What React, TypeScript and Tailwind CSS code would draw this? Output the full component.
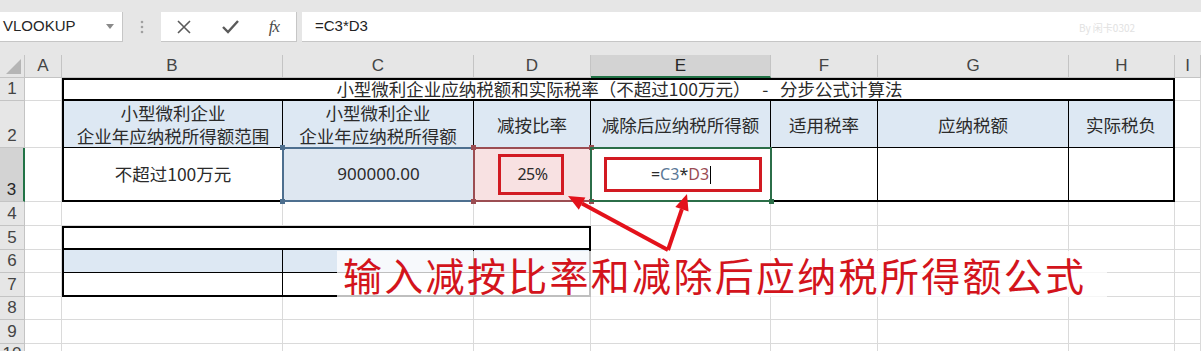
import React from "react";

const cols = ["A", "B", "C", "D", "E", "F", "G", "H", "I"];
const rowNums = [1, 2, 3, 4, 5, 6, 7, 8, 9, 10];

const cjk = "font-['Noto_Sans_CJK_SC','Noto_Sans',sans-serif]";

function Corner({ pos, color }: { pos: string; color: string }) {
  return <span className={`absolute w-[5px] h-[5px] ${pos} ${color}`} />;
}

function Toolbar() {
  return (
    <div className="h-[55px] bg-[#e6e6e6] pt-[12px] flex items-start">
      <div className="w-[123px] h-[30px] bg-white border-r border-b border-[#c6c6c6] flex items-center justify-between pl-[3px] pr-[8px]">
        <span className="text-[15px] text-[#262626] font-['Liberation_Sans',sans-serif]">VLOOKUP</span>
        <svg width="8" height="5" viewBox="0 0 8 5">
          <path d="M0 0 L8 0 L4 5 Z" fill="#8a8a8a" />
        </svg>
      </div>
      <div className="w-[38px] h-[30px] flex items-center justify-center">
        <svg width="4" height="14" viewBox="0 0 4 14">
          <circle cx="2" cy="2" r="1.3" fill="#a0a0a0" />
          <circle cx="2" cy="7" r="1.3" fill="#a0a0a0" />
          <circle cx="2" cy="12" r="1.3" fill="#a0a0a0" />
        </svg>
      </div>
      <div className="w-[136px] h-[30px] bg-white border-r border-b border-[#c6c6c6] flex items-center">
        <div className="w-[45px] flex justify-center pl-[1px]">
          <svg width="14" height="14" viewBox="0 0 14 14">
            <path d="M1 1 L13 13 M13 1 L1 13" stroke="#5a5a5a" strokeWidth="1.6" />
          </svg>
        </div>
        <div className="w-[48px] flex justify-center">
          <svg width="17" height="14" viewBox="0 0 17 14">
            <path d="M1 7 L6 12 L16 1" stroke="#5a5a5a" strokeWidth="2.4" fill="none" />
          </svg>
        </div>
        <div className="w-[40px] flex justify-center">
          <span className="italic text-[17px] text-[#4a4a4a] font-['Liberation_Serif',serif] tracking-[-1px]">fx</span>
        </div>
      </div>
      <div className="ml-[5px] flex-1 h-[30px] bg-white border-b border-[#c6c6c6] flex items-center pl-[13px] relative">
        <span className="text-[15px] text-[#222] font-['Liberation_Sans',sans-serif]">=C3*D3</span>
        <span className={`absolute left-[777px] top-[8px] text-[10px] text-[#e2e2e2] ${cjk}`}>By 闲卡0302</span>
      </div>
    </div>
  );
}

function Title() {
  const head = `flex items-center justify-center text-center text-[17.5px] leading-[23px] text-[#2b2b2b] bg-[#dde8f3] border-r border-black ${cjk}`;
  return (
    <div className="col-start-3 col-span-7 row-start-2 row-span-3 border-2 border-black bg-white grid grid-cols-[219px_191px_117px_180px_107px_191px_1fr]">
      <div className={`col-span-7 h-[21px] border-b-2 border-black flex items-center justify-center pl-[2px] text-[17.5px] text-[#2b2b2b] whitespace-pre ${cjk}`}>
        {"小型微利企业应纳税额和实际税率（不超过100万元）   -   分步公式计算法"}
      </div>
      <div className={`${head} h-[47px] border-b`}>
        小型微利企业
        <br />
        企业年应纳税所得额范围
      </div>
      <div className={`${head} h-[47px] border-b`}>
        小型微利企业
        <br />
        企业年应纳税所得额
      </div>
      <div className={`${head} h-[47px] border-b`}>减按比率</div>
      <div className={`${head} h-[47px] border-b`}>减除后应纳税所得额</div>
      <div className={`${head} h-[47px] border-b`}>适用税率</div>
      <div className={`${head} h-[47px] border-b`}>应纳税额</div>
      <div className={`${head} h-[47px] border-b border-r-0`}>实际税负</div>

      <div className={`h-[52px] border-r border-black flex items-center justify-center text-[17.5px] text-[#2b2b2b] ${cjk}`}>
        不超过100万元
      </div>
      <div className="h-[52px] relative bg-[#dee7f1] flex items-center justify-center text-[17px] text-[#2b2b2b] font-['Noto_Sans',sans-serif]">
        <span className="absolute left-[-1px] right-[-1px] top-[-1px] bottom-[-2px] border-2 border-[#4d6f8f]" />
        <Corner pos="left-[-3px] top-[-3px]" color="bg-[#4d6f8f]" />
        <Corner pos="left-[-3px] bottom-[-4px]" color="bg-[#4d6f8f]" />
        <span className="relative">900000.00</span>
      </div>
      <div className="h-[52px] relative bg-[#f8e1e2] flex items-center justify-center text-[16px] text-[#2b2b2b] font-['Noto_Sans',sans-serif]">
        <span className="absolute left-[-1px] right-[-1px] top-[-1px] bottom-[-2px] border-2 border-[#9c4d52]" />
        <Corner pos="left-[-3px] top-[-3px]" color="bg-[#9c4d52]" />
        <Corner pos="right-[-3px] top-[-3px]" color="bg-[#9c4d52]" />
        <Corner pos="left-[-3px] bottom-[-4px]" color="bg-[#9c4d52]" />
        <Corner pos="right-[-3px] bottom-[-4px]" color="bg-[#9c4d52]" />
        <span className="absolute left-[24px] top-[6px] w-[66px] h-[41px] border-[3px] border-[#d21a22]" />
        <span className="relative tracking-[-0.5px] mt-[-1px]">25%</span>
      </div>
      <div className="h-[52px] relative flex items-center justify-center text-[16px] font-['Noto_Sans',sans-serif]">
        <span className="absolute left-[-1px] right-[-1px] top-[-1px] bottom-[-2px] border-2 border-[#2b6e48]" />
        <Corner pos="right-[-3px] bottom-[-4px]" color="bg-[#2b6e48]" />
        <span className="absolute left-[13px] top-[9px] w-[158px] h-[35px] border-[3px] border-[#d21a22]" />
        <span className="relative mt-[-1px] text-[#2b2b2b]">
          =<span className="text-[#5b7896]">C3</span>*<span className="text-[#9a4c55]">D3</span>
          <span className="inline-block w-[1px] h-[18px] bg-black align-middle ml-[1px]" />
        </span>
      </div>
      <div className="h-[52px] border-r border-black" />
      <div className="h-[52px] border-r border-black" />
      <div className="h-[52px]" />
    </div>
  );
}

function SubTable() {
  return (
    <div className="col-start-3 col-span-3 row-start-6 row-span-3 border-2 border-black bg-white grid grid-cols-[219px_191px_1fr]">
      <div className="col-span-3 h-[22px] border-b-2 border-black" />
      <div className="h-[23px] bg-[#dde8f3] border-r border-b border-black" />
      <div className="h-[23px] bg-[#dde8f3] border-r border-b border-black" />
      <div className="h-[23px] bg-[#dde8f3] border-b border-black" />
      <div className="h-[22px] border-r border-black" />
      <div className="h-[22px] border-r border-black" />
      <div className="h-[22px]" />
    </div>
  );
}

function Sheet() {
  const covered = (r: number, c: number) =>
    (r >= 1 && r <= 3 && c >= 1 && c <= 7) || (r >= 5 && r <= 7 && c >= 1 && c <= 3);
  return (
    <div className="grid grid-cols-[25px_37px_221px_191px_117px_180px_107px_191px_106px_1fr] grid-rows-[23px_23px_47px_54px_24px_24px_23px_24px_23px_24px_1fr] h-[296px]">
      <div className="bg-[#e6e6e6] border-r border-b border-[#c4c4c4] flex items-end justify-end pr-[3px] pb-[3px]">
        <svg width="15" height="15" viewBox="0 0 15 15">
          <path d="M15 0 L15 15 L0 15 Z" fill="#b5b5b5" />
        </svg>
      </div>
      {cols.map((c) =>
        c === "E" ? (
          <div
            key={c}
            className="bg-[#d3d3d3] border-r border-[#c4c4c4] border-b-2 border-b-[#217346] flex items-center justify-center text-[17px] text-[#262626] font-['Liberation_Sans',sans-serif]"
          >
            {c}
          </div>
        ) : (
          <div
            key={c}
            className="bg-[#e6e6e6] border-r border-b border-[#c4c4c4] flex items-center justify-center text-[17px] text-[#444] font-['Liberation_Sans',sans-serif]"
          >
            {c}
          </div>
        )
      )}
      {rowNums.map((r) => (
        <React.Fragment key={r}>
          <div
            className={`border-b flex items-end justify-center pb-[1px] text-[17px] leading-[20px] font-['Liberation_Sans',sans-serif] ${
              r === 3
                ? "bg-[#d3d3d3] border-b-[#c4c4c4] border-r-2 border-r-[#217346] text-[#262626]"
                : "bg-[#e6e6e6] border-[#c4c4c4] border-r text-[#444]"
            }`}
          >
            {r}
          </div>
          {cols.map((c, i) =>
            covered(r, i) ? null : (
              <div key={c} className="bg-white border-r border-b border-[#dadada]" />
            )
          )}
          {r === 1 && <Title />}
          {r === 5 && <SubTable />}
        </React.Fragment>
      ))}
    </div>
  );
}

function Annotation() {
  return (
    <>
      <div className="absolute left-[337px] top-[251px] w-[770px] h-[46px] bg-white/75 flex items-center pl-[6px]">
        <span className={`text-[39px] leading-none tracking-[2.3px] text-[#d3141c] ${cjk}`}>输入减按比率和减除后应纳税所得额公式</span>
      </div>
      <svg className="absolute left-0 top-0 pointer-events-none" width="1201" height="351" viewBox="0 0 1201 351">
        <line x1="668" y1="250" x2="582" y2="203.6" stroke="#e3121b" strokeWidth="4" />
        <line x1="668" y1="250" x2="681.9" y2="209.2" stroke="#e3121b" strokeWidth="4" />
        <polygon points="568,196 585.4,197.4 578.8,209.8" fill="#e3121b" />
        <polygon points="687,194 688.5,211.4 675.3,207" fill="#e3121b" />
      </svg>
    </>
  );
}

export default function App() {
  return (
    <div className="w-[1201px] h-[351px] overflow-hidden relative bg-white">
      <Toolbar />
      <Sheet />
      <Annotation />
    </div>
  );
}
